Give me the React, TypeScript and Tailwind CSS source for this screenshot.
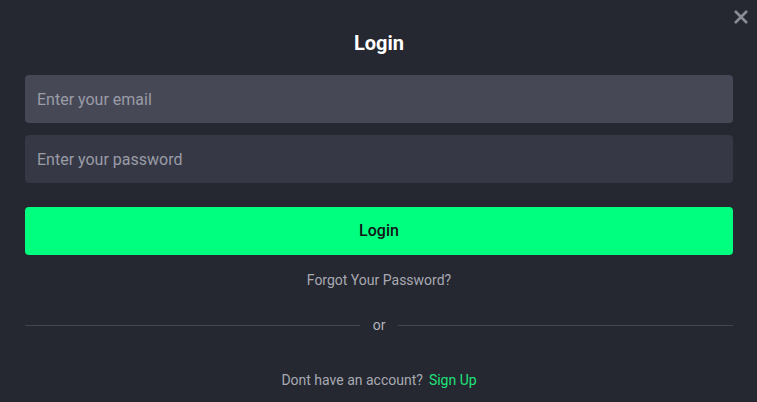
export default function App() {
  return (
    <div
      className="relative w-[757px] h-[402px] bg-[#252731] overflow-hidden"
      style={{ fontFamily: 'Roboto, "Liberation Sans", sans-serif' }}
    >
      <button className="absolute right-[8px] top-[9px] w-4 h-4 text-[#8b8d95]">
        <svg viewBox="0 0 16 16" width="16" height="16">
          <path d="M2 2 L14 14 M14 2 L2 14" stroke="currentColor" strokeWidth="2.6" strokeLinecap="butt" />
        </svg>
      </button>

      <div className="flex flex-col pl-[25px] pr-[24px] pt-[29px]">
        <h2 className="text-center text-[20px] leading-7 font-bold text-white">Login</h2>

        <input
          className="mt-[18px] h-12 rounded-[4px] bg-[#464856] px-3 text-[16px] text-white placeholder:text-[#9a9ca6] outline-none"
          placeholder="Enter your email"
        />
        <input
          type="password"
          className="mt-3 h-12 rounded-[4px] bg-[#363845] px-3 text-[16px] text-white placeholder:text-[#9a9ca6] outline-none"
          placeholder="Enter your password"
        />

        <button className="mt-6 h-12 rounded-[4px] bg-[#00ff7f] text-[16px] font-medium text-[#111318]">
          Login
        </button>

        <p className="mt-[15px] text-center text-[14px] leading-5 text-[#a8aab2]">Forgot Your Password?</p>

        <div className="mt-[25px] flex items-center gap-[13px]">
          <div className="flex-1 h-px bg-[#42444e]" />
          <span className="text-[14px] leading-5 text-[#b3b5bc]">or</span>
          <div className="flex-1 h-px bg-[#42444e]" />
        </div>

        <p className="mt-[35px] text-center text-[14px] leading-5 text-[#a8aab2]">
          Dont have an account?<span className="ml-[6px] text-[#1fe37a]">Sign Up</span>
        </p>
      </div>
    </div>
  );
}
